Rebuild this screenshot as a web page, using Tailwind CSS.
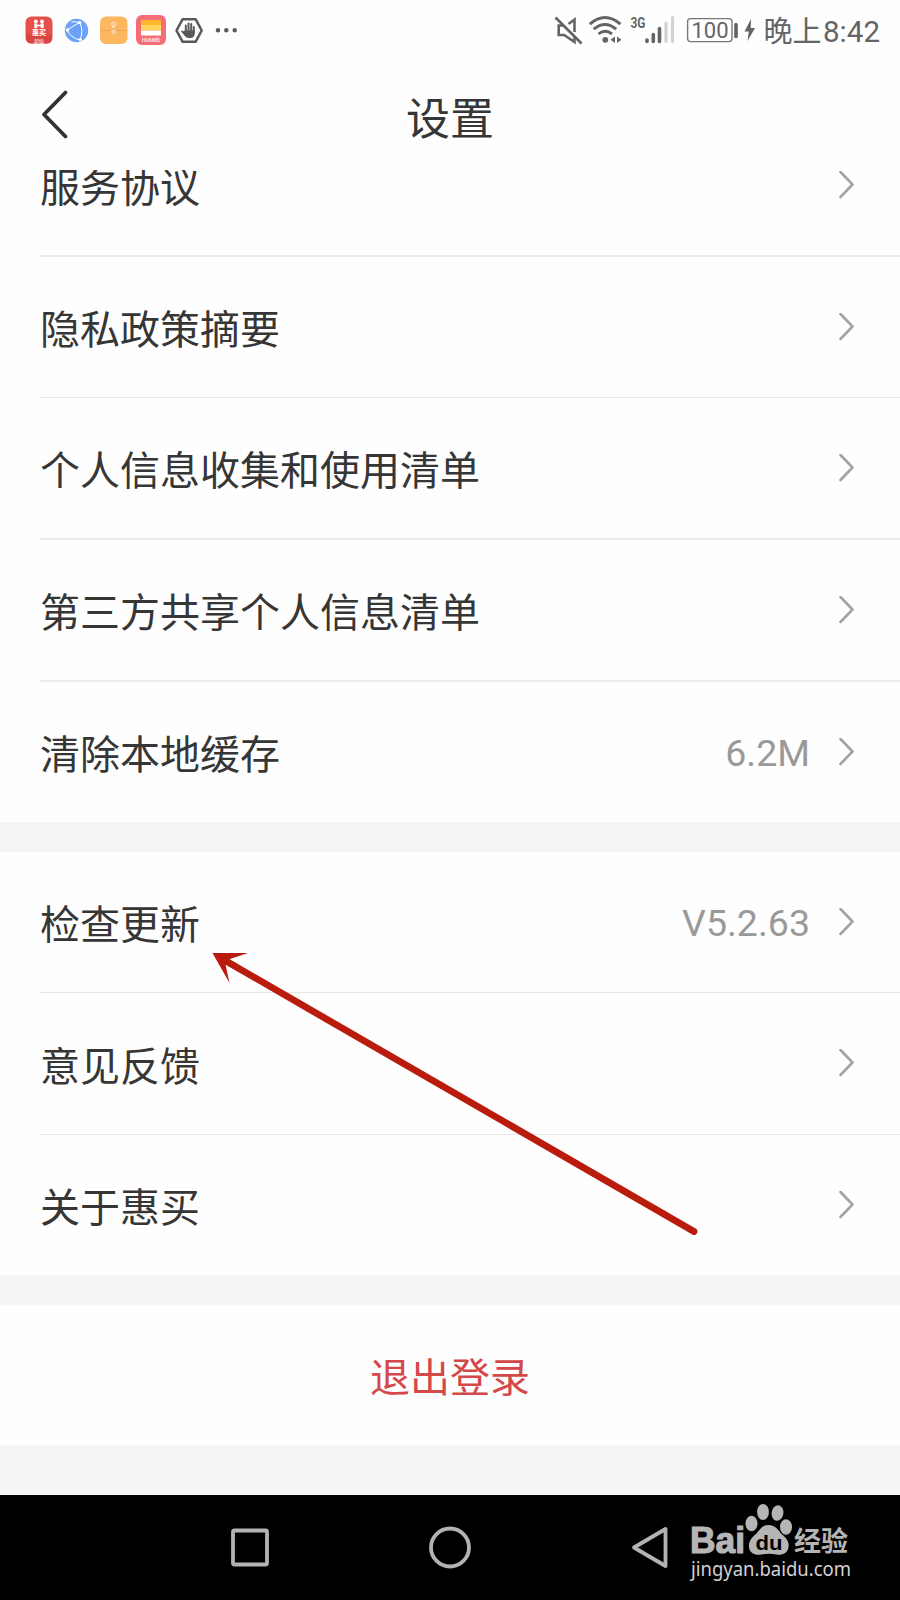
<!DOCTYPE html>
<html lang="zh-CN">
<head>
<meta charset="utf-8">
<title>设置</title>
<script src="https://cdn.jsdelivr.net/npm/@tailwindcss/browser@4"></script>
</head>
<body class="bg-white">
<svg class="hidden"><defs><path id="chev" d="M1.500 1 L13.500 13.500 L1.500 26" fill="none" stroke="#a3a3a3" stroke-width="2.600" stroke-linecap="round" stroke-linejoin="round"/></defs></svg>
<div class="relative flex h-[1600px] w-[900px] flex-col overflow-hidden bg-[#fefefe] font-['Noto_Sans_CJK_SC',sans-serif] text-[40px] text-[#363636]">
  <!-- Status bar -->
  <div class="flex h-[60px] shrink-0 items-center justify-between">
    <svg class="h-[60px] w-[250px]" viewBox="0 0 250 60">
      <rect x="25.500" y="16.500" width="27" height="27" rx="6" fill="#e5504c"/>
      <path d="M26 34q13 4 26 0v4q0 5.500-5.500 5.500h-15q-5.500 0-5.500-5.500z" fill="#d94541"/>
      <g fill="#fff"><circle cx="35.800" cy="21.500" r="1.900"/><circle cx="42" cy="21.500" r="1.900"/><path d="M34.300 23.500h3v1.300h3.400v-1.300h3v4.500h-3v-1.700h-3.400V28h-3z"/></g>
      <text x="39" y="35" text-anchor="middle" font-size="7" font-weight="700" fill="#fff">惠买</text>
      <text x="39" y="42.500" text-anchor="middle" font-size="5" fill="#fff">超值</text>
      <circle cx="76.500" cy="30.500" r="11.700" fill="#6ba2f8"/>
      <g fill="none" stroke="#fff" stroke-width="1"><path d="M67 30 79.500 22.500Q84 30 80 40M67 30q3 7.500 13 10M79.500 22.500q-5-1.500-8-.5"/></g>
      <g fill="#fff"><circle cx="67.500" cy="30" r="1.800"/><circle cx="79.800" cy="22.500" r="1.600"/><circle cx="80.200" cy="39.500" r="1.600"/></g>
      <rect x="100" y="16.500" width="27.500" height="27.500" rx="6" fill="#fbb860"/>
      <path d="M101 30.500h10m5 0h11" stroke="#eda64e"/>
      <g fill="none" stroke="#fff0d8" stroke-width="1"><circle cx="113.500" cy="24" r="1.900"/><path d="m112 26 1.500 2 1.500-2"/><circle cx="113.500" cy="32" r="1.600"/></g>
      <rect x="136" y="15" width="30" height="30" rx="6" fill="#f46e78"/>
      <path fill="#ffb72b" d="M141 20h20v5h-20z"/><path fill="#ffd55c" d="M141 25h20v5.500h-20z"/><path fill="#fff" d="M141 30.500h20v5h-20z"/>
      <text x="151" y="42" text-anchor="middle" font-family="Roboto" font-size="4.800" font-weight="700" textLength="18" fill="#ffe5e8">HUAWEI</text>
      <path d="M182.500 19.300h13.200l6 11.200-6 11.200h-13.200l-6-11.200z" fill="none" stroke="#595959" stroke-width="2.500" stroke-linejoin="round"/>
      <g fill="none" stroke="#595959" stroke-width="2" stroke-linecap="round"><path d="M185.800 32v-6.500M188.500 31v-7.500M191.200 31v-7M193.800 32v-5M185.500 34l-3.300-2.500"/></g>
      <path d="M184.800 30.500h10v3.500q-.8 4-4.300 4h-2.500q-2.500-.5-5.500-5z" fill="#595959"/>
      <g fill="#595959"><circle cx="218" cy="30.200" r="2.200"/><circle cx="226.300" cy="30.200" r="2.200"/><circle cx="234.700" cy="30.200" r="2.200"/></g>
    </svg>
    <svg class="h-[60px] w-[360px]" viewBox="540 0 360 60">
      <g fill="none" stroke="#646464" stroke-width="2.600">
        <path d="M555.500 17.500 581.500 43.500"/><path d="M564 25.500h-5.300v9.500h5.500l10.300 7v-5M568.500 24l6-4.500V32"/>
        <g stroke-width="2.900"><path d="M589.800 24.200q15.200-13.200 30.600 0M593.700 29.200q11.200-9.500 22.600 0M598.500 34q6.700-5.500 13.500 0"/></g>
      </g>
      <circle cx="605.300" cy="39.800" r="2.900" fill="#646464"/>
      <path d="m615 36.500v6.500l-4.500-3.200zM617 36.500v6.500l4.500-3.200z" fill="#646464"/>
      <text x="630.500" y="28" font-family="Roboto" font-size="15.500" font-weight="700" textLength="15" lengthAdjust="spacingAndGlyphs" fill="#646464">3G</text>
      <g stroke-linecap="round" stroke-width="3.600" stroke="#646464"><path d="M647 40v1.500M653.300 34.500v7M659.500 28.500v13"/><path stroke="#d3d3d3" stroke-width="3.200" d="M666 23v18.500M672.500 17.500v24"/></g>
      <rect x="687.600" y="18.600" width="44.400" height="23" rx="3" fill="none" stroke="#777" stroke-width="1.400"/>
      <text x="710" y="38" text-anchor="middle" font-family="Roboto" font-size="22" textLength="37" fill="#646464">100</text>
      <path d="M736 24.500v12" stroke="#646464" stroke-width="3.600" stroke-linecap="round"/>
      <path d="m751 19-6.500 12.500h4.300L747.500 41l7.500-13h-4.300z" fill="#646464"/>
      <text x="763.500" y="41.500" font-size="29" fill="#646464">晚上</text>
      <text x="823" y="41.500" font-family="Roboto" font-size="30" textLength="57" lengthAdjust="spacingAndGlyphs" fill="#646464">8:42</text>
    </svg>
  </div>
  <!-- Title bar -->
  <header class="grid h-[110px] shrink-0 grid-cols-3 items-center pb-[2px]">
    <svg class="ml-[37px] h-[54px] w-8" viewBox="0 0 32 54" fill="none" stroke="#333" stroke-width="3.800" stroke-linecap="round" stroke-linejoin="round"><path d="M28.500 5.500 7 27.500 28.500 49.500"/></svg>
    <h1 class="pt-[3px] text-center text-[44px] leading-[60px]">设置</h1>
  </header>
  <!-- Settings list -->
  <main class="flex flex-1 flex-col bg-[#f5f5f5]">
    <section class="h-[652px] shrink-0 overflow-hidden bg-[#fefefe] pl-10">
      <div class="-mt-[55px] flex h-[142px] items-center justify-between border-b-2 border-[#ececec] pr-[45px]"><span>服务协议</span><svg class="h-[29px] w-4"><use href="#chev"/></svg></div>
      <div class="flex h-[141px] items-center justify-between border-b border-[#e6e6e6] pr-[45px]"><span>隐私政策摘要</span><svg class="h-[29px] w-4"><use href="#chev"/></svg></div>
      <div class="flex h-[142px] items-center justify-between border-b-2 border-[#ececec] pr-[45px]"><span>个人信息收集和使用清单</span><svg class="h-[29px] w-4"><use href="#chev"/></svg></div>
      <div class="flex h-[142px] items-center justify-between border-b-2 border-[#ececec] pr-[45px]"><span>第三方共享个人信息清单</span><svg class="h-[29px] w-4"><use href="#chev"/></svg></div>
      <div class="flex h-[140px] items-center justify-between pr-[45px]"><span>清除本地缓存</span><div class="flex items-center gap-[29px]"><span class="pt-[2px] font-[Roboto] text-[37.5px] text-[#999]">6.2M</span><svg class="h-[29px] w-4"><use href="#chev"/></svg></div></div>
    </section>
    <section class="mt-[30px] shrink-0 bg-[#fefefe] pl-10">
      <div class="flex h-[141px] items-center justify-between border-b border-[#e6e6e6] pr-[45px]"><span>检查更新</span><div class="flex items-center gap-[29px]"><span class="pt-[2px] font-[Roboto] text-[37.5px] text-[#999]">V5.2.63</span><svg class="h-[29px] w-4"><use href="#chev"/></svg></div></div>
      <div class="flex h-[142px] items-center justify-between border-b border-[#e6e6e6] pr-[45px]"><span>意见反馈</span><svg class="h-[29px] w-4"><use href="#chev"/></svg></div>
      <div class="flex h-[140px] items-center justify-between pr-[45px]"><span>关于惠买</span><svg class="h-[29px] w-4"><use href="#chev"/></svg></div>
    </section>
    <button class="mt-[30px] h-[140px] shrink-0 bg-[#fefefe] text-[#d5484a]">退出登录</button>
  </main>
  <!-- Navigation bar -->
  <nav class="h-[105px] shrink-0 bg-black">
    <svg class="h-[105px] w-[900px]" viewBox="0 1495 900 105">
      <g fill="none" stroke="#b3b3b3" stroke-width="3.800" stroke-linejoin="round"><rect x="233" y="1530.500" width="34" height="34" rx="1.500"/><circle cx="450" cy="1547.500" r="19"/><path d="M665.500 1529v37L634 1547.500z"/></g>
      <g fill="#b5b5b5">
        <text x="690" y="1553" font-family="Liberation Sans" font-size="36" font-weight="700" textLength="55" lengthAdjust="spacingAndGlyphs" stroke="#b5b5b5" stroke-width="1.200">Bai</text>
        <ellipse cx="751.500" cy="1523.500" rx="6" ry="7.800"/><ellipse cx="763" cy="1512" rx="5.900" ry="8"/><ellipse cx="777.500" cy="1513" rx="5.900" ry="7.800" transform="rotate(8 777.500 1513)"/><ellipse cx="786" cy="1527" rx="6" ry="7.800"/>
        <path d="M768.500 1525c6 0 9 4 12.500 8.500 5 4 8.500 8 7.500 13.500-1 7-7 8.500-12 7.500-5.500-1-10-1-15 0-6 1-12-1-12.500-7.500-.5-6.500 3-9.500 7.500-13.500 3.500-4.500 6-8.500 12-8.500z"/>
        <text x="794" y="1551" font-size="27" font-weight="700" textLength="54" lengthAdjust="spacingAndGlyphs">经验</text>
      </g>
      <text x="755.500" y="1550" font-family="Liberation Sans" font-size="21" font-weight="700" textLength="27" lengthAdjust="spacingAndGlyphs" fill="#000">du</text>
      <text x="691" y="1576" font-family="Noto Sans" font-size="19.500" textLength="160" lengthAdjust="spacingAndGlyphs" fill="#d2d2d2">jingyan.baidu.com</text>
    </svg>
  </nav>
  <!-- Pointer arrow over the list -->
  <svg class="pointer-events-none absolute top-[940px] left-[200px] h-[310px] w-[510px]" viewBox="200 940 510 310">
    <path d="M226 961 694 1231.500" stroke="#b91c0d" stroke-width="6.800" stroke-linecap="round"/>
    <path d="M212.500 953h35.500l-19.500 6.500-3 5 4 18.500z" fill="#b91c0d"/>
  </svg>
</div>
</body>
</html>
